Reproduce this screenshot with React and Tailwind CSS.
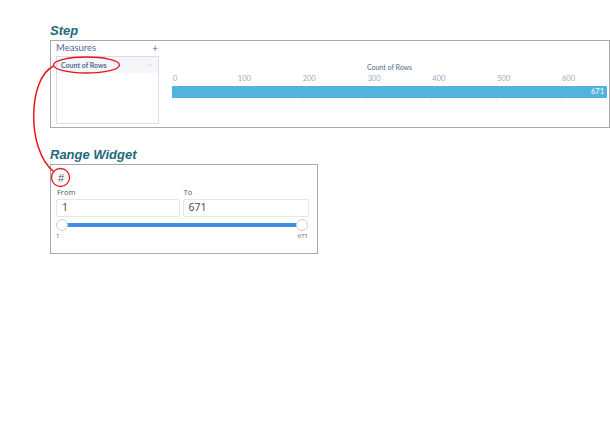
import React from 'react';
import { ChevronDown } from 'lucide-react';

const ticks = [0, 100, 200, 300, 400, 500, 600];
const total = 671;
const chartWidth = 435;

const App = () => {
  return (
    <div className="relative w-[610px] h-[442px] bg-white overflow-hidden" style={{ fontFamily: '"Open Sans", "Liberation Sans", sans-serif' }}>
      <div className="pl-[50px] pt-[22px]">
        {/* Step */}
        <h2 className="text-[13px] leading-[18px] font-bold italic text-[#1d6b7d]" style={{ fontFamily: '"Liberation Sans", Arial, sans-serif' }}>Step</h2>
        <div className="w-[560px] h-[88px] border border-[#a9a9a9] flex">
          <div className="w-[110px] pl-[5px] pr-[2px] flex flex-col">
            <div className="flex items-center justify-between h-[14px] pr-[1px]">
              <span className="text-[9.5px] text-[#54698d]" style={{ fontFamily: 'Lato, sans-serif' }}>Measures</span>
              <span className="text-[10px] text-[#54698d] leading-none">+</span>
            </div>
            <div className="w-[103px] h-[68px] border border-[#d8dde6] mt-[1px]">
              <div className="h-[16px] bg-[#f4f6f9] flex items-center justify-between pl-[4px] pr-[5px]">
                <span className="text-[7px] font-bold text-[#54698d]" style={{ fontFamily: 'Lato, sans-serif' }}>Count of Rows</span>
                <ChevronDown className="w-[6px] h-[6px] text-[#a8b7c7]" strokeWidth={2} />
              </div>
            </div>
          </div>
          <div className="flex-1 pl-[11px] pt-[22px]">
            <div className="w-[435px] text-center text-[7px] leading-[9px] text-[#54698d]" style={{ fontFamily: 'Lato, sans-serif' }}>Count of Rows</div>
            <div className="relative w-[435px] h-[30px]">
              {ticks.map((t) => (
                <React.Fragment key={t}>
                  <span
                    className="absolute top-[2px] text-[7.5px] leading-[9px] text-[#a0aabd]"
                    style={{ left: (t / total) * chartWidth + 1, fontFamily: 'Lato, sans-serif' }}
                  >
                    {t}
                  </span>
                  <span
                    className="absolute top-[13px] h-[16px] w-px bg-[#eef0f4]"
                    style={{ left: (t / total) * chartWidth }}
                  />
                </React.Fragment>
              ))}
              <div className="absolute left-0 top-[14px] h-[12px] w-full bg-[#52b4de] flex items-center justify-end pr-[3px]">
                <span className="text-[7.5px] text-white" style={{ fontFamily: 'Lato, sans-serif' }}>671</span>
              </div>
            </div>
          </div>
        </div>

        {/* Range Widget */}
        <h2 className="mt-[18px] text-[13px] leading-[18px] font-bold italic text-[#1d6b7d]" style={{ fontFamily: '"Liberation Sans", Arial, sans-serif' }}>Range Widget</h2>
        <div className="w-[268px] h-[90px] border border-[#a9a9a9] pl-[5px] pr-[8px] pt-[7px]">
          <div className="text-[11px] leading-[13px] text-[#555] pl-[2px]" style={{ fontFamily: '"Liberation Sans", sans-serif' }}>#</div>
          <div className="flex gap-[3px] mt-[2px]">
            <div className="w-[124px]">
              <div className="text-[7.5px] leading-[10px] text-[#555] pl-[1px]">From</div>
              <div className="mt-[2px] h-[18px] border border-[#e5e5e5] rounded-[2px] flex items-center pl-[5px] text-[10.5px] text-[#444]">1</div>
            </div>
            <div className="w-[127px]">
              <div className="text-[7.5px] leading-[10px] text-[#555] pl-[1px]">To</div>
              <div className="mt-[2px] h-[18px] border border-[#e5e5e5] rounded-[2px] flex items-center pl-[5px] text-[10.5px] text-[#444]">671</div>
            </div>
          </div>
          <div className="relative mt-[2px] h-[12px] w-[252px]">
            <div className="absolute left-[5px] right-[5px] top-[4px] h-[4px] rounded-full bg-[#3b90e9]" />
            <div className="absolute left-0 top-0 w-[12px] h-[12px] rounded-full bg-white border border-[#d0d0d0]" />
            <div className="absolute right-0 top-0 w-[12px] h-[12px] rounded-full bg-white border border-[#d0d0d0]" />
          </div>
          <div className="flex justify-between w-[252px] text-[6px] leading-[8px] text-[#555] mt-[1px]">
            <span>1</span>
            <span>671</span>
          </div>
        </div>
      </div>

      {/* Annotations */}
      <svg className="absolute inset-0 pointer-events-none" width="610" height="442">
        <ellipse cx="86.5" cy="65" rx="33" ry="8" fill="none" stroke="#e8141c" strokeWidth="1.3" />
        <circle cx="60.5" cy="177.5" r="9" fill="none" stroke="#e8141c" strokeWidth="1.3" />
        <path d="M53.5 66 C 28 78, 26 150, 54 172" fill="none" stroke="#e8141c" strokeWidth="1.5" />
      </svg>
    </div>
  );
};

export default App;
